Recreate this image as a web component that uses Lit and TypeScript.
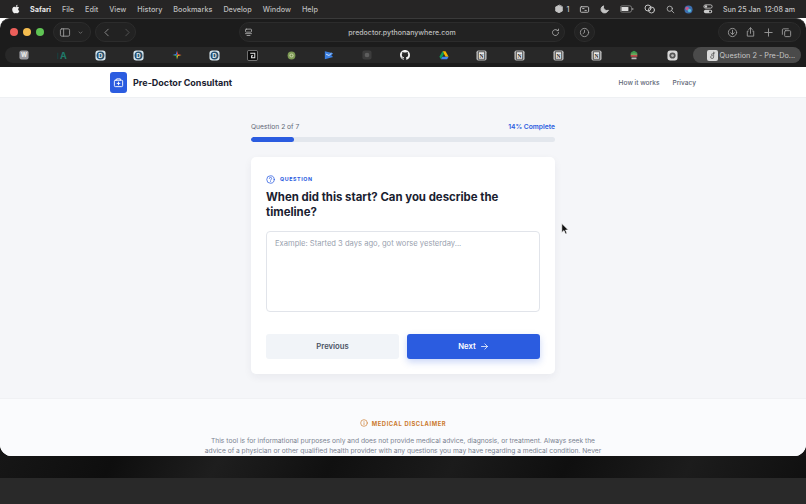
import { LitElement, html, css, svg } from "lit";
import { customElement } from "lit/decorators.js";

const sans = css`"Inter", "Liberation Sans", sans-serif`;

const D = html`<svg viewBox="0 0 12 12" width="11" height="11"><rect x=".5" y=".5" width="11" height="11" rx="3" fill="#d7e6ee"/><circle cx="6" cy="6" r="4.3" fill="#27506d"/><text x="6" y="8.4" font-size="6.6" font-weight="700" text-anchor="middle" fill="#e6f0f5" font-family="Inter">D</text></svg>`;
const N = html`<svg viewBox="0 0 12 12" width="11" height="11"><rect x=".5" y=".5" width="11" height="11" rx="2" fill="#b9b9b9"/><rect x="2.5" y="2" width="7" height="8" fill="#e8e8e8" stroke="#333" stroke-width=".8"/><text x="6" y="8.5" font-size="6" font-weight="700" text-anchor="middle" fill="#222" font-family="Liberation Serif">N</text></svg>`;

const favicons = [
  html`<svg viewBox="0 0 12 12" width="10" height="10"><rect x=".5" y=".5" width="11" height="11" rx="2.5" fill="#9b9aa0"/><text x="6" y="8.6" font-size="7" font-weight="700" text-anchor="middle" fill="#eee" font-family="Inter">W</text></svg>`,
  html`<svg viewBox="0 0 12 12" width="11" height="11"><text x="7" y="10" font-size="10" font-weight="700" text-anchor="middle" fill="#1f7a6a" font-family="Inter">A</text><rect x="0" y="3" width="1.5" height="7" fill="#1c3a3a"/></svg>`,
  D, D,
  html`<svg viewBox="0 0 12 12" width="10" height="10"><path d="M6 0.5 7.3 4.7 6 6Z" fill="#e5483d"/><path d="M11.5 6 7.3 4.7 6 6Z" fill="#e5483d"/><path d="M11.5 6 7.3 7.3 6 6Z" fill="#f0b429"/><path d="M6 11.5 7.3 7.3 6 6Z" fill="#f0b429"/><path d="M6 11.5 4.7 7.3 6 6Z" fill="#39a85f"/><path d="M.5 6 4.7 7.3 6 6Z" fill="#39a85f"/><path d="M.5 6 4.7 4.7 6 6Z" fill="#3f7fe8"/><path d="M6 .5 4.7 4.7 6 6Z" fill="#3f7fe8"/></svg>`,
  D,
  html`<svg viewBox="0 0 12 12" width="11" height="11"><rect x=".5" y=".5" width="11" height="11" rx="1.5" fill="#0b0b0b" stroke="#9a9a9a" stroke-width=".8"/><path d="M3.5 3.5h5v5h-3.5v-2.2h1.6" fill="none" stroke="#e8e8e8" stroke-width="1.1"/></svg>`,
  html`<svg viewBox="0 0 12 12" width="9" height="9"><circle cx="6" cy="6" r="5.2" fill="#7d9a55"/><circle cx="6" cy="6" r="2.8" fill="#c3d0a0"/><circle cx="6" cy="6" r="1.3" fill="#6d8a48"/></svg>`,
  html`<svg viewBox="0 0 12 12" width="10" height="10"><path d="M1 1.5 11 4 8.8 6.5 11 8.5 1 11Z" fill="#3b7fe0"/><path d="M2.5 5 6 6.6 9 3.8" fill="none" stroke="#dbe8fa" stroke-width="1.1"/></svg>`,
  html`<svg viewBox="0 0 12 12" width="10" height="10"><rect x=".5" y=".5" width="11" height="11" rx="2.5" fill="#3c3c3c"/><circle cx="6" cy="6" r="2.8" fill="#5e5e5e"/></svg>`,
  html`<svg viewBox="0 0 16 16" width="10" height="10"><path fill="#f2f2f2" d="M8 0C3.58 0 0 3.58 0 8c0 3.54 2.29 6.53 5.47 7.59.4.07.55-.17.55-.38 0-.19-.01-.82-.01-1.49-2.01.37-2.53-.49-2.69-.94-.09-.23-.48-.94-.82-1.13-.28-.15-.68-.52-.01-.53.63-.01 1.08.58 1.23.82.72 1.21 1.87.87 2.33.66.07-.52.28-.87.51-1.07-1.78-.2-3.64-.89-3.64-3.95 0-.87.31-1.59.82-2.15-.08-.2-.36-1.02.08-2.12 0 0 .67-.21 2.2.82.64-.18 1.32-.27 2-.27s1.36.09 2 .27c1.53-1.04 2.2-.82 2.2-.82.44 1.1.16 1.92.08 2.12.51.56.82 1.27.82 2.15 0 3.07-1.87 3.75-3.65 3.95.29.25.54.73.54 1.48 0 1.07-.01 1.93-.01 2.2 0 .21.15.46.55.38A8.01 8.01 0 0 0 16 8c0-4.42-3.58-8-8-8z"/></svg>`,
  html`<svg viewBox="0 0 12 12" width="10" height="10"><path d="M4.2 1.5h3.6L11.5 8H7.9Z" fill="#f4b400"/><path d="M4.2 1.5 .5 8l1.8 3 3.7-6.4Z" fill="#0f9d58"/><path d="M2.3 11h7.4l1.8-3H4.100Z" fill="#4285f4"/></svg>`,
  N, N, N, N,
  html`<svg viewBox="0 0 12 12" width="10" height="10"><path d="M2 3 6 1l4 2-4 2Z" fill="#3c9a4f"/><path d="M2 6h8v2H2Z" fill="#c24e4e"/><path d="M3 9h6v2H3Z" fill="#b9b9b9"/><path d="M2 4h8v2H2Z" fill="#6aa85e"/></svg>`,
  html`<svg viewBox="0 0 12 12" width="11" height="11"><rect x=".5" y=".5" width="11" height="11" rx="3" fill="#d8d8d8"/><circle cx="6" cy="6" r="3.4" fill="#555"/><circle cx="6" cy="6" r="1.5" fill="#bbb"/></svg>`,
];

const si = (body: unknown, w = 12, h = 12, vb = "0 0 24 24") =>
  html`<svg viewBox=${vb} width=${w} height=${h} fill="none" stroke="currentColor" stroke-width="2" stroke-linecap="round" stroke-linejoin="round">${body}</svg>`;

@customElement("app-root")
export class AppRoot extends LitElement {
  static styles = css`
    :host { display: block; width: 806px; height: 504px; overflow: hidden; position: relative; background: linear-gradient(#141414 478px, #292929 478px); font-family: ${sans}; }
    * { box-sizing: border-box; }
    .menubar { height: 18px; background: #262525; display: flex; align-items: center; padding: 0 11px; color: #bdbdbd; font-size: 7.25px; font-weight: 500; }
    .apple { width: 9px; margin-right: 10px; display: flex; }
    .menus { display: flex; gap: 11px; align-items: center; }
    .menus b { color: #e8e8e8; font-weight: 700; }
    .status { margin-left: auto; display: flex; align-items: center; color: #c4c4c4; }
    .status > * { margin-left: 9.5px; display: flex; align-items: center; }
    .status .clock { margin-left: 10px; font-size: 7.05px; }
    .window { height: 438px; border-radius: 0 0 12px 12px; overflow: hidden; display: flex; flex-direction: column; background: #fff; }
    .toolbar { height: 27px; flex: none; background: #1c1c1c; display: flex; align-items: center; padding: 0 5px 0 10px; border-top: 1px solid #3a3a3a; border-radius: 10px 10px 0 0; color: #9a9a9a; }
    .lights { display: flex; gap: 5px; margin-right: 9px; }
    .lights i { width: 8px; height: 8px; border-radius: 50%; }
    .pill { height: 20px; border-radius: 10px; background: #222; border: 1px solid #2c2c2c; display: flex; align-items: center; }
    .side { width: 38px; padding-left: 5px; gap: 6px; margin-right: 4px; }
    .nav { width: 41px; padding-left: 6px; gap: 10px; margin-right: 103px; }
    .nav svg:last-child { color: #5c5c5c; }
    .url { width: 326px; padding: 0 4px; justify-content: space-between; color: #bdbdbd; font-size: 7px; font-weight: 500; margin-right: 9px; }
    .round { width: 21px; justify-content: center; margin-right: auto; }
    .actions { width: 83px; justify-content: space-around; padding: 0 4px; }
    .tabs { height: 22px; flex: none; background: #1c1c1c; padding: 2px 5px 4px; display: flex; align-items: stretch; }
    .strip { flex: 1; border-radius: 8px; background: #282828; display: flex; align-items: center; }
    .fav { width: 38.15px; flex: none; display: flex; justify-content: center; align-items: center; }
    .active { flex: 1; height: 16px; margin-left: 1px; border-radius: 8px; background: #4a4a4a; display: flex; align-items: center; padding-left: 14px; gap: 2px; color: #c6c6c6; font-size: 7.3px; white-space: nowrap; overflow: hidden; }
    .ticon { width: 11px; height: 11px; border-radius: 2px; background: #d9d9d9; flex: none; display: flex; align-items: center; justify-content: center; color: #555; }
    .page { height: 389px; flex: none; display: flex; flex-direction: column; background: #f5f6f9; overflow: hidden; }
    header { height: 31px; flex: none; background: #fff; border-bottom: 1px solid #eef0f3; display: flex; align-items: center; padding: 0 110px; }
    .logo { width: 17px; height: 21px; border-radius: 3px; background: #2b5ce0; color: #fff; display: flex; align-items: center; justify-content: center; margin-right: 6px; }
    .brand { font-size: 9px; font-weight: 700; color: #1a2130; padding-top: 1px; }
    .links { margin-left: auto; display: flex; gap: 13px; font-size: 6.6px; font-weight: 500; color: #5d6675; padding-top: 2px; }
    main { height: 300px; flex: none; padding: 24px 251px 0; }
    .progress-row { display: flex; justify-content: space-between; align-items: center; height: 10px; font-size: 6.7px; color: #5f6877; }
    .pct { color: #2b5ce0; font-weight: 600; }
    .track { height: 5px; margin-top: 5px; border-radius: 3px; background: #e3e7ed; overflow: hidden; }
    .fill { height: 100%; border-radius: 3px; background: #2b5ce0; }
    .card { margin-top: 15px; height: 217px; border-radius: 5px; background: #fff; padding: 16px 15px; box-shadow: 0 3px 9px rgba(30,40,70,.06); }
    .tag { display: flex; align-items: center; gap: 5px; height: 12px; color: #2b5ce0; font-size: 5.3px; font-weight: 700; letter-spacing: .6px; }
    h1 { margin: 5px 0 0; font-size: 11.4px; line-height: 15px; font-weight: 700; color: #1a2130; }
    .area { margin-top: 11px; height: 81px; border: 1px solid #e1e4ea; border-radius: 4px; padding: 7px 8px; font-size: 7.6px; color: #9aa2af; background: #fff; }
    .btns { display: flex; gap: 8px; margin-top: 22px; }
    .btn { flex: 1; height: 25px; border-radius: 3px; display: flex; align-items: center; justify-content: center; gap: 4px; font-size: 7.7px; font-weight: 600; }
    .prev { background: #f1f4f8; color: #4a5363; }
    .next { background: #2b5ce0; color: #fff; box-shadow: 0 3px 7px rgba(43,92,224,.25); }
    footer { flex: 1; background: #fafbfd; border-top: 1px solid #f0f1f4; padding-top: 19px; text-align: center; overflow: hidden; }
    .disc { display: flex; justify-content: center; align-items: center; gap: 4px; height: 10px; color: #cc7a2e; font-size: 5.8px; font-weight: 700; letter-spacing: .6px; }
    .note { margin: 9px auto 0; width: 402px; font-size: 6.68px; line-height: 9.5px; color: #7a8391; }
    .wall { height: 22px; background: linear-gradient(115deg, #161616 0%, #0e0e0e 14%, #1e1e1e 27%, #101010 41%, #1b1b1b 56%, #0f0f0f 70%, #1c1c1c 85%, #101010 100%); }
    .cursor { position: absolute; left: 561px; top: 223px; }
  `;

  render() {
    const tabsIcons = favicons.map((f) => html`<span class="fav">${f}</span>`);
    return html`
      <div class="menubar">
        <span class="apple"><svg viewBox="0 0 14 16" width="9" height="10" fill="#f0f0f0"><path d="M11.2 8.5c0-1.7 1.4-2.5 1.5-2.6-.8-1.2-2.1-1.3-2.5-1.4-1.1-.1-2.1.6-2.6.6s-1.4-.6-2.3-.6C4 4.5 2.900 5.200 2.300 6.200c-1.200 2.100-.3 5.200.9 6.900.6.800 1.300 1.800 2.200 1.700.9 0 1.200-.6 2.300-.6s1.400.6 2.300.6 1.500-.8 2.100-1.700c.7-1 1-1.900 1-2-.1 0-1.900-.7-1.900-2.600zM9.500 3.400c.5-.6.800-1.400.7-2.200-.7 0-1.500.5-2 1-.4.500-.8 1.300-.7 2.100.8.100 1.500-.4 2-.9z"/></svg></span>
        <div class="menus"><b>Safari</b><span>File</span><span>Edit</span><span>View</span><span>History</span><span>Bookmarks</span><span>Develop</span><span>Window</span><span>Help</span></div>
        <div class="status">
          <span>${si(svg`<path d="M12 3 4 7v10l8 4 8-4V7Z" fill="currentColor"/>`, 10, 10)}&nbsp;1</span>
          <span>${si(svg`<rect x="3" y="6" width="18" height="12" rx="2"/><path d="M8 10h3M13 14h3"/>`, 11, 11)}</span>
          <span>${si(svg`<path d="M20 14A8 8 0 0 1 10 4a8 8 0 1 0 10 10Z" fill="currentColor"/>`, 11, 11)}</span>
          <span><svg viewBox="0 0 20 10" width="14" height="8"><rect x=".5" y=".5" width="16" height="9" rx="2.500" fill="none" stroke="#999"/><rect x="2" y="2" width="10" height="6" rx="1" fill="#ddd"/><rect x="17.500" y="3.500" width="1.500" height="3" fill="#999"/></svg></span>
          <span>${si(svg`<circle cx="9" cy="10" r="6"/><circle cx="16" cy="14" r="6"/>`, 13, 12)}</span>
          <span>${si(svg`<circle cx="10" cy="10" r="7"/><path d="m15 15 6 6"/>`, 9, 9)}</span>
          <span><svg viewBox="0 0 10 10" width="9" height="9"><circle cx="5" cy="5" r="4.500" fill="#3c6fb0"/><circle cx="3.500" cy="4" r="2" fill="#c45a8a"/><circle cx="6" cy="6" r="1.800" fill="#5cc0d8"/></svg></span>
          <span><svg viewBox="0 0 12 12" width="10" height="10"><rect x="1" y="1" width="10" height="4" rx="2" fill="none" stroke="#ccc"/><circle cx="3.500" cy="3" r="1.500" fill="#ccc"/><rect x="1" y="7" width="10" height="4" rx="2" fill="#ccc"/><circle cx="8.500" cy="9" r="1.300" fill="#222"/></svg></span>
          <span class="clock">Sun 25 Jan&nbsp; 12:08 am</span>
        </div>
      </div>
      <div class="window">
        <div class="toolbar">
          <div class="lights"><i style="background:#ec5f5a"></i><i style="background:#f5bd4f"></i><i style="background:#5fc454"></i></div>
          <div class="pill side">
            ${si(svg`<rect x="2" y="4" width="20" height="16" rx="3"/><path d="M9 4v16"/>`, 12, 11)}
            ${si(svg`<path d="m7 10 5 5 5-5"/>`, 7, 7)}
          </div>
          <div class="pill nav">
            ${si(svg`<path d="m15 4-8 8 8 8"/>`, 10, 11)}
            ${si(svg`<path d="m9 4 8 8-8 8"/>`, 10, 11)}
          </div>
          <div class="pill url">
            ${si(svg`<rect x="4" y="3" width="16" height="8" rx="2"/><path d="M4 15h16M8 20h8"/>`, 9, 9)}
            <span>predoctor.pythonanywhere.com</span>
            ${si(svg`<path d="M20 12a8 8 0 1 1-3-6.200M20 3v4h-4"/>`, 9, 9)}
          </div>
          <div class="pill round">${si(svg`<circle cx="12" cy="12" r="9"/><path d="M12 7v5l-3 2"/>`, 11, 11)}</div>
          <div class="pill actions">
            ${si(svg`<circle cx="12" cy="12" r="9"/><path d="M12 7v9M8 12.500l4 4 4-4"/>`, 11, 11)}
            ${si(svg`<path d="M7 10H5v11h14V10h-2M12 15V3M8 6.500 12 3l4 3.500"/>`, 11, 12)}
            ${si(svg`<path d="M12 4v16M4 12h16"/>`, 11, 11)}
            ${si(svg`<rect x="8" y="8" width="13" height="13" rx="2"/><path d="M16 4H5a2 2 0 0 0-2 2v10"/>`, 11, 11)}
          </div>
        </div>
        <div class="tabs">
          <div class="strip">
            ${tabsIcons}
            <div class="active"><span class="ticon">${si(svg`<path d="M15 3v13a4 4 0 1 1-3-3.800M9 9l9-4"/>`, 9, 9)}</span>Question 2 - Pre-Do...</div>
          </div>
        </div>
        <div class="page">
          <header>
            <div class="logo">${si(svg`<rect x="3" y="7" width="18" height="14" rx="2"/><path d="M8 7V4h8v3M12 11v6M9 14h6"/>`, 11, 11)}</div>
            <div class="brand">Pre-Doctor Consultant</div>
            <div class="links"><span>How it works</span><span>Privacy</span></div>
          </header>
          <main>
            <div class="progress-row"><span>Question 2 of 7</span><span class="pct">14% Complete</span></div>
            <div class="track"><div class="fill" style="width:14%"></div></div>
            <div class="card">
              <div class="tag">${si(svg`<circle cx="12" cy="12" r="10"/><path d="M9 9a3 3 0 0 1 6 .500c0 2-3 2.500-3 4.500M12 17.500h.01"/>`, 9, 9)}QUESTION</div>
              <h1>When did this start? Can you describe the timeline?</h1>
              <div class="area">Example: Started 3 days ago, got worse yesterday...</div>
              <div class="btns">
                <div class="btn prev">Previous</div>
                <div class="btn next">Next ${si(svg`<path d="M4 12h16M13 5l7 7-7 7"/>`, 9, 9)}</div>
              </div>
            </div>
          </main>
          <footer>
            <div class="disc">${si(svg`<circle cx="12" cy="12" r="10"/><path d="M12 11v6M12 7.500h.01"/>`, 8, 8)}MEDICAL DISCLAIMER</div>
            <div class="note">This tool is for informational purposes only and does not provide medical advice, diagnosis, or treatment. Always seek the advice of a physician or other qualified health provider with any questions you may have regarding a medical condition. Never</div>
          </footer>
        </div>
      </div>
      <div class="wall"></div>
      <svg class="cursor" width="8" height="12" viewBox="0 0 8 12"><path d="M.8.500v9l2.200-2 1.500 3.500 1.500-.6L4.500 7h2.800Z" fill="#111" stroke="#fff" stroke-width=".6"/></svg>
    `;
  }
}
